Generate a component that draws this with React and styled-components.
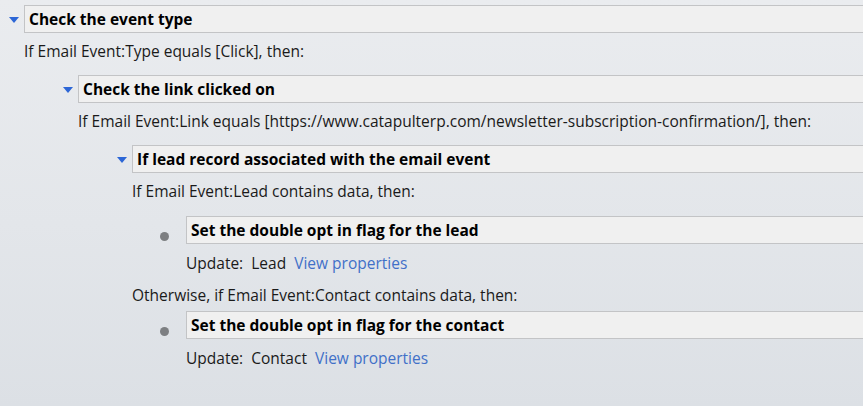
import React from "react";
import styled, { createGlobalStyle } from "styled-components";

const GlobalStyle = createGlobalStyle`
  html, body {
    margin: 0;
    padding: 0;
  }
  body {
    width: 863px;
    height: 406px;
    overflow: hidden;
    background: linear-gradient(180deg, #eaecef 0%, #e3e6ea 55%, #dce0e5 100%);
    font-family: "Open Sans", "Noto Sans", sans-serif;
    color: #1a1a1a;
  }
`;

const Tree = styled.div`
  padding-top: 5px;
`;

const Node = styled.div`
  margin-left: ${(p) => p.$indent || 0}px;
`;

const HeaderRow = styled.div`
  display: flex;
  align-items: stretch;
  height: 28px;
`;

const Marker = styled.div`
  width: 24px;
  flex: none;
  position: relative;
`;

const Triangle = styled.span`
  position: absolute;
  left: 9px;
  top: 12px;
  width: 0;
  height: 0;
  border-left: 5.5px solid transparent;
  border-right: 5.5px solid transparent;
  border-top: 6px solid #2c66d6;
`;

const Bullet = styled.span`
  position: absolute;
  left: -2px;
  top: 16px;
  width: 9px;
  height: 9px;
  border-radius: 50%;
  background: #7d7f82;
`;

const Bar = styled.div`
  flex: 1;
  display: flex;
  align-items: center;
  padding-left: 4px;
  background: #f0f0f0;
  border: 1px solid #c3c4c6;
  border-right: none;
  font-weight: 700;
  font-size: 15.5px;
  color: #000;
  white-space: nowrap;
`;

const Body = styled.div`
  padding-left: 24px;
`;

const Line = styled.div`
  font-size: 15.5px;
  line-height: 21px;
  white-space: nowrap;
  padding-top: ${(p) => p.$top ?? 8}px;
  padding-bottom: ${(p) => p.$bottom ?? 13}px;
`;

const Link = styled.span`
  color: #4170c8;
  cursor: pointer;
`;

const Toggle = () => (
  <Marker>
    <Triangle />
  </Marker>
);

const Dot = () => (
  <Marker>
    <Bullet />
  </Marker>
);

const Action = ({ title, entity }) => (
  <Node $indent={30}>
    <HeaderRow>
      <Dot />
      <Bar>{title}</Bar>
    </HeaderRow>
    <Body>
      <Line $top={9} $bottom={3}>
        Update:&nbsp; {entity}&nbsp; <Link>View properties</Link>
      </Line>
    </Body>
  </Node>
);

export default function App() {
  return (
    <>
      <GlobalStyle />
      <Tree>
        <Node>
          <HeaderRow>
            <Toggle />
            <Bar>Check the event type</Bar>
          </HeaderRow>
          <Body>
            <Line>If Email Event:Type equals [Click], then:</Line>
            <Node $indent={30}>
              <HeaderRow>
                <Toggle />
                <Bar>Check the link clicked on</Bar>
              </HeaderRow>
              <Body>
                <Line>
                  If Email Event:Link equals
                  [https://www.catapulterp.com/newsletter-subscription-confirmation/],
                  then:
                </Line>
                <Node $indent={30}>
                  <HeaderRow>
                    <Toggle />
                    <Bar>If lead record associated with the email event</Bar>
                  </HeaderRow>
                  <Body>
                    <Line $bottom={14}>If Email Event:Lead contains data, then:</Line>
                    <Action
                      title="Set the double opt in flag for the lead"
                      entity="Lead"
                    />
                    <Line $top={8} $bottom={5}>
                      Otherwise, if Email Event:Contact contains data, then:
                    </Line>
                    <Action
                      title="Set the double opt in flag for the contact"
                      entity="Contact"
                    />
                  </Body>
                </Node>
              </Body>
            </Node>
          </Body>
        </Node>
      </Tree>
    </>
  );
}
